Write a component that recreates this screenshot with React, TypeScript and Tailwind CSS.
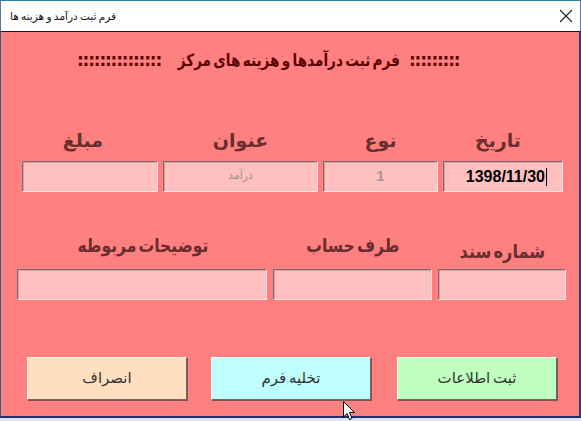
import React from "react";

const fa = { fontFamily: '"DejaVu Sans", "Noto Sans", sans-serif' };

function Field({ w, children, className = "" }: { w: string; children?: React.ReactNode; className?: string }) {
  return (
    <div
      className={`${w} h-[31px] bg-[#ffc0c0] border border-t-[#8c6a6a] border-l-[#8c6a6a] border-b-[#f6e6e6] border-r-[#f6e6e6] shadow-[inset_1px_1px_0_#cfa0a0] flex items-center ${className}`}
    >
      {children}
    </div>
  );
}

function Btn({ bg, label }: { bg: string; label: string }) {
  return (
    <div
      className={`w-[160px] h-[43px] shrink-0 ${bg} border border-t-[#fafafa] border-l-[#fafafa] border-b-[#6a6a6a] border-r-[#6a6a6a] shadow-[1px_1px_0_#8a5050] flex items-center justify-center text-[15px] text-[#333333] [word-spacing:-2px]`}
      style={fa}
      dir="rtl"
    >
      {label}
    </div>
  );
}

function Label({ children, className = "" }: { children: React.ReactNode; className?: string }) {
  return (
    <div className={`h-[24px] text-[19px] font-bold leading-[24px] whitespace-nowrap [word-spacing:-4px] ${className}`} dir="rtl" style={fa}>
      {children}
    </div>
  );
}

export default function App() {
  return (
    <div className="w-[581px] h-[421px] bg-[#dfe3f2] relative overflow-hidden">
      {/* title bar */}
      <div className="h-[32px] shrink-0 bg-white border-t border-t-[#2f7fa0] border-b border-b-[#1a1a1a] border-l border-l-[#5878a0] border-r border-r-[#5878a0] flex items-center justify-between pl-[9px] pr-[6px]">
        <span className="text-[10.5px] text-[#111] leading-none [word-spacing:-1px]" style={fa} dir="rtl">
          فرم ثبت درآمد و هزینه ها
        </span>
        <svg width="14" height="14" viewBox="0 0 14 14" className="mr-[1px]">
          <path d="M1 1 L13 13 M13 1 L1 13" stroke="#222" strokeWidth="1.1" />
        </svg>
      </div>
      {/* body */}
      <div className="h-[386px] bg-[#ff8080] border-l border-l-[#3a5a8a] border-r-2 border-r-[#27406e] border-b-2 border-b-[#1f2f70] flex flex-col">
        {/* heading */}
        <div className="pt-[15px] h-[43px] shrink-0 flex pl-[76px] text-[#5c0000]" style={fa}>
          <div className="w-[84px] h-[28px] flex items-center text-[17px] font-bold tracking-[-1.2px] whitespace-nowrap">
            :::::::::::::::
          </div>
          <div className="w-[224px] ml-[16px] h-[28px] flex items-center justify-center whitespace-nowrap">
            <span className="text-[17px] font-bold [word-spacing:-3px] scale-x-[0.8]" dir="rtl">فرم ثبت درآمدها و هزینه های مرکز</span>
          </div>
          <div className="w-[53px] ml-[8px] h-[28px] flex items-center text-[17px] font-bold tracking-[-1.2px] whitespace-nowrap">
            :::::::::
          </div>
        </div>
        {/* row 1 */}
        <div className="flex shrink-0 pl-[21px] gap-[5px] mt-[53px] text-[#6a2e2e]">
          <div className="flex flex-col items-center">
            <Label className="mb-[9px] -translate-x-[7px]">مبلغ</Label>
            <Field w="w-[136px]" />
          </div>
          <div className="flex flex-col items-center">
            <Label className="mb-[9px]">عنوان</Label>
            <Field w="w-[155px]" className="justify-center">
              <span className="text-[11px] text-[#a09090]" dir="rtl" style={fa}>درآمد</span>
            </Field>
          </div>
          <div className="flex flex-col items-center">
            <Label className="mb-[9px]">نوع</Label>
            <Field w="w-[115px]" className="justify-center">
              <span className="text-[15px] font-bold text-[#a89898]" style={{ fontFamily: '"Liberation Sans", sans-serif' }}>1</span>
            </Field>
          </div>
          <div className="flex flex-col items-center">
            <Label className="mb-[9px] -translate-x-[5px]">تاریخ</Label>
            <Field w="w-[120px]" className="justify-end pr-[15px]">
              <span className="text-[16px] font-bold text-black" style={{ fontFamily: '"Liberation Sans", sans-serif' }}>1398/11/30</span>
              <span className="w-px h-[18px] bg-black ml-[1px]" />
            </Field>
          </div>
        </div>
        {/* row 2 */}
        <div className="flex shrink-0 pl-[16px] gap-[6px] mt-[41px] text-[#6a2e2e]">
          <div className="flex flex-col items-center">
            <Label className="mb-[12px] translate-x-[1px] scale-x-[0.82]">توضیحات مربوطه</Label>
            <Field w="w-[250px]" />
          </div>
          <div className="flex flex-col items-center">
            <Label className="mb-[12px] scale-x-[0.82]">طرف حساب</Label>
            <Field w="w-[159px]" />
          </div>
          <div className="flex flex-col items-center">
            <Label className="mt-[6px] mb-[6px] scale-x-[0.85]">شماره سند</Label>
            <Field w="w-[128px]" />
          </div>
        </div>
        {/* buttons */}
        <div className="flex shrink-0 pl-[26px] mt-[57px]">
          <Btn bg="bg-[#ffdfc0]" label="انصراف" />
          <div className="w-[24px]" />
          <Btn bg="bg-[#c0ffff]" label="تخلیه فرم" />
          <div className="w-[26px]" />
          <Btn bg="bg-[#c0ffc0]" label="ثبت اطلاعات" />
        </div>
      </div>
      {/* mouse cursor */}
      <svg className="absolute left-[343px] top-[401px]" width="13" height="20" viewBox="0 0 13 20">
        <path d="M0.5 0.5 L0.5 16 L4 12.5 L6.5 18.5 L9 17.5 L6.5 11.5 L11.5 11.5 Z" fill="white" stroke="black" strokeWidth="1" strokeLinejoin="miter" />
      </svg>
    </div>
  );
}
